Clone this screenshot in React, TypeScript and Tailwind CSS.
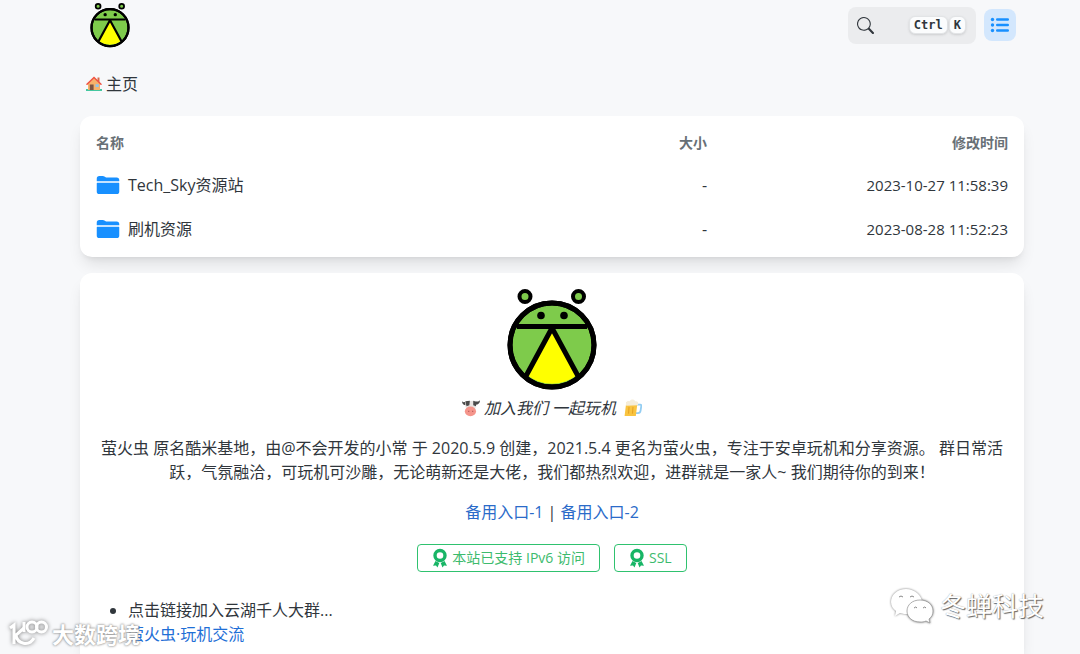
import { IoFolder } from 'react-icons/io5'
import { BsSearch } from 'react-icons/bs'

interface FileRow {
  name: string
  size: string
  modified: string
}

const files: FileRow[] = [
  { name: 'Tech_Sky资源站', size: '-', modified: '2023-10-27 11:58:39' },
  { name: '刷机资源', size: '-', modified: '2023-08-28 11:52:23' },
]

const Logo = ({ className }: { className?: string }) => (
  <svg viewBox="0 0 100 100" className={className} overflow="visible" role="img" aria-label="logo">
    <g stroke="#000" fill="#7ecb4b">
      <circle cx="23" cy="7.5" r="5.5" strokeWidth="4" />
      <circle cx="76.5" cy="7.5" r="5.5" strokeWidth="4" />
      <circle cx="50" cy="56" r="42" strokeWidth="5" />
      <path d="M50 39 L25 86 A40 40 0 0 0 75 86 Z" fill="#ff0" stroke="none" />
      <path d="M15 37.5H85M50 39L24 87M50 39L76 87" fill="none" strokeWidth="5" />
      <circle cx="50" cy="56" r="42" fill="none" strokeWidth="5" />
    </g>
    <circle cx="39" cy="26.5" r="3.8" />
    <circle cx="62" cy="26.5" r="3.8" />
  </svg>
)

const House = () => (
  <svg viewBox="0 0.5 16 15" className="size-4" aria-hidden="true">
    <path d="M0 13h16v2H0z" fill="#44c7a0" />
    <path d="M2 7.500 8 2l6 5.500V14H2z" fill="#f6b26b" />
    <path d="M11.500 1.500h2v5l-2-2z" fill="#d9694a" />
    <path d="M1 8.200 8 1.500l7 6.700" fill="none" stroke="#ef5140" strokeWidth="1.500" strokeLinecap="round" />
    <path d="M3.800 8.500h3.800V14H3.800z" fill="#7d5543" />
    <path d="M9.500 8.200h3.200V11H9.500z" fill="#8fc5ec" />
  </svg>
)

const Cow = () => (
  <svg viewBox="1 1.500 16 16" className="size-[18px]" aria-hidden="true">
    <path d="M1 3.500c1 1 2 1 3 .5l.5 3C2.500 7 1 6 1 3.500zM17 2.500c-1 1-2 1.500-4 1l0 3c2.500 0 4-1.500 4-4z" fill="#4a4a4a" />
    <path d="M4 3.500 13 3l.5 5-2 6H6L4 8z" fill="#e9e5e3" />
    <path d="M4 3.500 8 3l-.5 4L5 8zM11 3l2.500 1v4L11 7z" fill="#4a4a4a" />
    <ellipse cx="8.500" cy="12.500" rx="5" ry="4.300" fill="#f5958b" />
    <path d="M7 12v1M10.500 12v1" stroke="#b85b5b" />
  </svg>
)

const Beer = () => (
  <svg viewBox="1 1 16 16" className="size-[18px]" aria-hidden="true">
    <path d="M12 6h3.500q1 0 .8 1.500l-.6 4q-.3 2-2.300 2H11" fill="none" stroke="#93cdf2" strokeWidth="1.600" />
    <path d="M3 4h10l-1.500 12h-10z" fill="#f9c440" />
    <path d="M5.500 8 5 14M9 8l-.5 6" stroke="#e8a525" />
    <path d="M3 7C2 4 4 2 6 3c1-2 4-2 5 0 2-.5 3 1 2.500 3.500z" fill="#f5edda" />
  </svg>
)

const Award = () => (
  <svg viewBox="0 0 16 20" className="h-5 w-4" aria-hidden="true">
    <circle cx="8" cy="7.500" r="5" fill="none" stroke="#18b566" strokeWidth="3.400" />
    <path d="M3.500 13 7.300 15 5.500 19.500 4 17.500 1 17.800zM12.500 13 8.700 15l1.800 4.500 1.500-2 3 .3z" fill="#18b566" />
  </svg>
)

const Badge = ({ label }: { label: string }) => (
  <a
    href="#"
    className="flex h-7 items-center gap-1 rounded border border-[#2fc26f] px-3.5 text-sm text-[#3dbb6d]"
  >
    <Award />
    {label}
  </a>
)

const Key = ({ children }: { children: string }) => (
  <kbd className="rounded-md border border-[#e2e4e6] bg-[#fbfcfd] px-1 font-['DejaVu_Sans_Mono',monospace] text-xs leading-4 font-bold shadow-sm">
    {children}
  </kbd>
)

const Header = () => (
  <header className="flex h-[50px] items-center justify-between px-2">
    <a href="#">
      <Logo className="size-11" />
    </a>
    <div className="flex items-center gap-2">
      <button
        type="button"
        aria-label="搜索"
        className="flex h-[37px] w-32 items-center justify-between rounded-lg bg-[#ebecee] pr-2.5 pl-2"
      >
        <BsSearch className="ml-px size-[17px]" />
        <span className="flex gap-px">
          <Key>Ctrl</Key>
          <Key>K</Key>
        </span>
      </button>
      <button
        type="button"
        aria-label="列表视图"
        className="flex size-8 items-center justify-center rounded-lg bg-[#d3e7fd] text-[#1890ff]"
      >
        <svg viewBox="0 0 20 20" className="size-5" fill="currentColor">
          {[4.5, 10, 15.5].map((y) => (
            <g key={y}>
              <circle cx="2.500" cy={y} r="1.700" />
              <rect x="6" y={y - 1.2} width="13" height="2.400" rx="1.200" />
            </g>
          ))}
        </svg>
      </button>
    </div>
  </header>
)

const FileTable = () => (
  <section className="rounded-xl bg-white px-4 py-1.5 shadow-lg">
    <table className="w-full table-fixed">
      <thead className="text-sm text-[#687076]">
        <tr className="h-[41px]">
          <th className="w-[50%] text-left font-bold">名称</th>
          <th className="w-[17%] text-right font-bold">大小</th>
          <th className="w-[33%] text-right font-bold">修改时间</th>
        </tr>
      </thead>
      <tbody>
        {files.map((file) => (
          <tr key={file.name} className="h-11">
            <td>
              <a href="#" className="flex items-center gap-2">
                <IoFolder className="size-6 text-[#1890ff]" />
                {file.name}
              </a>
            </td>
            <td className="text-right">{file.size}</td>
            <td className="text-right text-[15px]">{file.modified}</td>
          </tr>
        ))}
      </tbody>
    </table>
  </section>
)

const Readme = () => (
  <section className="flex flex-1 flex-col gap-4 rounded-t-xl bg-white px-4 pt-4 shadow-lg">
    <div className="flex flex-col items-center">
      <Logo className="size-[100px]" />
      <p className="mt-[7px] flex items-center gap-1 italic">
        <Cow />
        加入我们 一起玩机
        <span className="ml-1">
          <Beer />
        </span>
      </p>
    </div>
    <p className="text-center">
      萤火虫 原名酷米基地，由@不会开发的小常 于 2020.5.9 创建，2021.5.4 更名为萤火虫，专注于安卓玩机和分享资源。 群日常活跃，气氛融洽，可玩机可沙雕，无论萌新还是大佬，我们都热烈欢迎，进群就是一家人~
      我们期待你的到来！
    </p>
    <p className="text-center">
      <a href="#" className="text-[#2b6bc9]">
        备用入口-1
      </a>{' '}
      |{' '}
      <a href="#" className="text-[#2b6bc9]">
        备用入口-2
      </a>
    </p>
    <div className="mt-1 flex justify-center gap-3.5">
      <Badge label="本站已支持 IPv6 访问" />
      <Badge label="SSL" />
    </div>
    <ul className="mt-2.5 list-disc pl-8">
      <li>
        点击链接加入云湖千人大群...
        <br />
        <a href="#" className="text-[#1f6fd6]">
          萤火虫·玩机交流
        </a>
      </li>
    </ul>
  </section>
)

const CornerMark = () => (
  <div className="absolute bottom-1 left-2 flex items-center gap-1 text-[22px] leading-8 font-bold text-white [text-shadow:0_0_2px_#888,0_0_3px_#aaa]">
    <svg viewBox="0 0 40 30" className="h-[30px] w-10 drop-shadow-[0_0_2px_#777]" fill="none" stroke="#fff" strokeWidth="3">
      <path d="M2 9l4-3v19M16 9l-8 7c1 9 13 12 18 3" />
      <circle cx="24" cy="8" r="5" />
      <circle cx="33.5" cy="8" r="5" />
      <path d="M16 3v10" />
    </svg>
    大数跨境
  </div>
)

const AuthorMark = () => (
  <div className="absolute right-9 bottom-7 flex items-center gap-1.5 text-[26px] leading-10 text-white [text-shadow:1px_1px_1px_#666,0_0_1px_#999]">
    <svg viewBox="0 0 44 36" className="h-9 w-11 drop-shadow-[0_0_1px_#777]" fill="#fff">
      <path d="M16 1C7 1 1 7 1 14c0 4 2 7 5 9l-1 5 5-3c3 1 5 1 8 1 8 0 14-6 14-12S25 1 16 1z" />
      <path
        d="M30 12c-8 0-13 5-13 11s5 11 13 11c2 0 4 0 6-1l4 2-1-4c3-2 4-5 4-8 0-6-5-11-13-11z"
        stroke="#999"
        strokeWidth="0.8"
      />
      <path d="M9 9q2-2 4 0M20 9q2-2 4 0M24 20q2-2 3 0M33 20q2-2 3 0" fill="none" stroke="#888" />
    </svg>
    冬蝉科技
  </div>
)

const App = () => (
  <div className="relative flex min-h-screen flex-col bg-[#f7f8fa] pr-14 pl-20 font-['Open_Sans','Noto_Sans_CJK_SC',sans-serif] text-base leading-6 text-[#30363c]">
    <Header />
    <nav className="mt-[22px] mb-5 flex h-6 items-center gap-1 pl-1.5">
      <House />
      <a href="#">主页</a>
    </nav>
    <main className="flex flex-1 flex-col gap-4">
      <FileTable />
      <Readme />
    </main>
    <CornerMark />
    <AuthorMark />
  </div>
)

export default App
